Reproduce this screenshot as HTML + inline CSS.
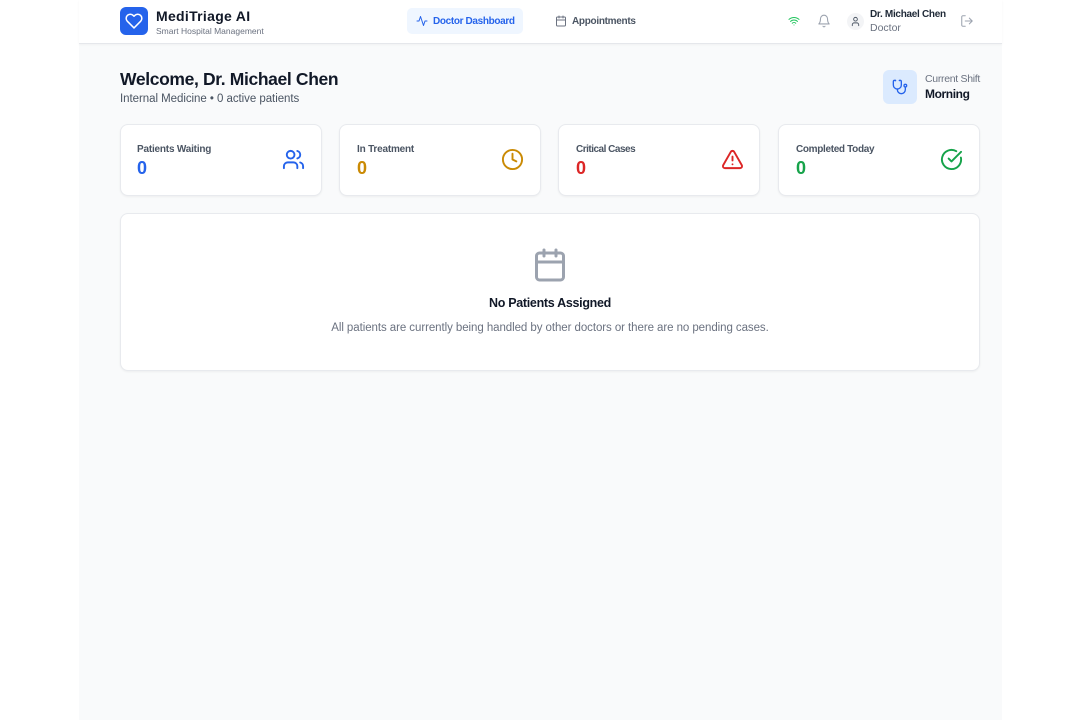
<!DOCTYPE html>
<html><head><meta charset="utf-8"><title>MediTriage AI</title>
<style>
*{box-sizing:border-box;margin:0;padding:0}
html,body{width:1080px;height:720px;background:#fff;overflow:hidden;font-family:"Liberation Sans","Noto Sans CJK SC",sans-serif}
.abs,.t,svg{position:absolute}
.t{white-space:nowrap;line-height:1}
svg{fill:none;stroke-linecap:round;stroke-linejoin:round;stroke-width:2}
.card{position:absolute;background:#fff;border:1px solid #e8eaee;border-radius:8px;box-shadow:0 1px 2px rgba(0,0,0,.05)}
.lbl{font-size:10px;font-weight:700;color:#4b5563;top:145px}
.num{font-size:18px;font-weight:700;top:159px}
</style></head><body>
<div class="abs" style="left:79px;top:0;width:923px;height:720px;background:#f9fafb"></div>
<div class="abs" style="left:79px;top:0;width:923px;height:44px;background:#fff;border-bottom:1px solid #e5e7eb;box-shadow:0 1px 2px rgba(0,0,0,.04)"></div>

<div class="abs" style="left:120px;top:7px;width:28px;height:28px;border-radius:6px;background:#2563eb"></div>
<svg style="left:125px;top:12px;stroke:#fff" width="18" height="18" viewBox="0 0 24 24"><path d="M20.840 4.610a5.500 5.500 0 0 0-7.780 0L12 5.670l-1.060-1.060a5.500 5.500 0 0 0-7.780 7.780l1.060 1.060L12 21.230l7.780-7.780 1.060-1.060a5.500 5.500 0 0 0 0-7.780z"/></svg>
<div class="t" style="left:156px;top:9px;font-size:14px;font-weight:700;color:#111827;letter-spacing:.3px">MediTriage AI</div>
<div class="t" style="left:156px;top:27px;font-size:8.500px;color:#6b7280">Smart Hospital Management</div>

<div class="abs" style="left:407px;top:8px;width:116px;height:26px;border-radius:5px;background:#eff6ff"></div>
<svg style="left:416px;top:15px;stroke:#2563eb;stroke-width:2" width="12" height="12" viewBox="0 0 24 24"><path d="M22 12h-4l-3 9L9 3l-3 9H2"/></svg>
<div class="t" style="left:433px;top:17px;font-size:10px;font-weight:700;color:#2563eb;letter-spacing:-.35px">Doctor Dashboard</div>
<svg style="left:555px;top:15px;stroke:#6b7280" width="12" height="12" viewBox="0 0 24 24"><path d="M8 2v4M16 2v4"/><rect x="3" y="4" width="18" height="18" rx="2"/><path d="M3 10h18"/></svg>
<div class="t" style="left:572px;top:17px;font-size:10px;font-weight:700;color:#4b5563;letter-spacing:-.3px">Appointments</div>

<svg style="left:788px;top:15px;stroke:#22c55e" width="12" height="12" viewBox="0 0 24 24"><path d="M12 20h.01M2 8.820a15 15 0 0 1 20 0M5 12.859a10 10 0 0 1 14 0M8.500 16.429a5 5 0 0 1 7 0"/></svg>
<svg style="left:817px;top:14px;stroke:#9ca3af;stroke-width:1.800" width="14" height="14" viewBox="0 0 24 24"><path d="M6 8a6 6 0 0 1 12 0c0 7 3 9 3 9H3s3-2 3-9M10.300 21a1.940 1.940 0 0 0 3.400 0"/></svg>
<div class="abs" style="left:847px;top:13px;width:17px;height:17px;border-radius:50%;background:#f3f4f6"></div>
<svg style="left:850px;top:16px;stroke:#4b5563" width="11" height="11" viewBox="0 0 24 24"><path d="M19 21v-2a4 4 0 0 0-4-4H9a4 4 0 0 0-4 4v2"/><circle cx="12" cy="7" r="4"/></svg>
<div class="t" style="left:870px;top:10px;font-size:10px;font-weight:700;color:#1f2937;letter-spacing:-.3px">Dr. Michael Chen</div>
<div class="t" style="left:870px;top:23px;font-size:10.500px;color:#6b7280">Doctor</div>
<svg style="left:960px;top:14px;stroke:#9ca3af;stroke-width:1.800" width="14" height="14" viewBox="0 0 24 24"><path d="M9 21H5a2 2 0 0 1-2-2V5a2 2 0 0 1 2-2h4M16 17l5-5-5-5M21 12H9"/></svg>

<div class="t" style="left:120px;top:71px;font-size:17.500px;font-weight:700;color:#111827;letter-spacing:-.36px">Welcome, Dr. Michael Chen</div>
<div class="t" style="left:120px;top:94px;font-size:11.500px;color:#4b5563;letter-spacing:-.05px">Internal Medicine • 0 active patients</div>

<div class="abs" style="left:883px;top:70px;width:34px;height:34px;border-radius:6px;background:#dbeafe"></div>
<svg style="left:892px;top:79px;stroke:#2563eb" width="16" height="16" viewBox="0 0 24 24"><path d="M4.800 2.300A.3.300 0 1 0 5 2H4a2 2 0 0 0-2 2v5a6 6 0 0 0 6 6 6 6 0 0 0 6-6V4a2 2 0 0 0-2-2h-1a.2.200 0 1 0 .3.300"/><path d="M8 15v1a6 6 0 0 0 6 6 6 6 0 0 0 6-6v-4"/><circle cx="20" cy="10" r="2"/></svg>
<div class="t" style="left:925px;top:74px;font-size:10.500px;color:#6b7280;letter-spacing:-.3px">Current Shift</div>
<div class="t" style="left:925px;top:88px;font-size:12px;font-weight:700;color:#111827;letter-spacing:-.4px">Morning</div>

<div class="card" style="left:120px;top:124px;width:202px;height:72px"></div>
<div class="card" style="left:339px;top:124px;width:202px;height:72px"></div>
<div class="card" style="left:558px;top:124px;width:202px;height:72px"></div>
<div class="card" style="left:778px;top:124px;width:202px;height:72px"></div>

<div class="t lbl" style="left:137px;letter-spacing:-.2px">Patients Waiting</div><div class="t num" style="left:137px;color:#2563eb">0</div>
<div class="t lbl" style="left:357px;letter-spacing:-.2px">In Treatment</div><div class="t num" style="left:357px;color:#ca8a04">0</div>
<div class="t lbl" style="left:576px;letter-spacing:-.5px">Critical Cases</div><div class="t num" style="left:576px;color:#dc2626">0</div>
<div class="t lbl" style="left:796px;letter-spacing:-.33px">Completed Today</div><div class="t num" style="left:796px;color:#16a34a">0</div>

<svg style="left:282px;top:148px;stroke:#2563eb" width="23" height="23" viewBox="0 0 24 24"><path d="M16 21v-2a4 4 0 0 0-4-4H6a4 4 0 0 0-4 4v2"/><circle cx="9" cy="7" r="4"/><path d="M22 21v-2a4 4 0 0 0-3-3.870M16 3.130a4 4 0 0 1 0 7.750"/></svg>
<svg style="left:500.500px;top:148px;stroke:#ca8a04" width="23" height="23" viewBox="0 0 24 24"><circle cx="12" cy="12" r="10"/><path d="M12 6v6l4 2"/></svg>
<svg style="left:720.500px;top:148px;stroke:#dc2626" width="23" height="23" viewBox="0 0 24 24"><path d="m21.730 18-8-14a2 2 0 0 0-3.480 0l-8 14A2 2 0 0 0 4 21h16a2 2 0 0 0 1.730-3M12 9v4M12 17h.01"/></svg>
<svg style="left:940px;top:148px;stroke:#16a34a" width="23" height="23" viewBox="0 0 24 24"><path d="M21.800 10A10 10 0 1 1 17 3.340"/><path d="m9 11 3 3L22 4"/></svg>

<div class="card" style="left:120px;top:213px;width:860px;height:158px"></div>
<svg style="left:532px;top:247px;stroke:#9ca3af" width="36" height="36" viewBox="0 0 24 24"><path d="M8 2v4M16 2v4"/><rect x="3" y="4" width="18" height="18" rx="2"/><path d="M3 10h18"/></svg>
<div class="t" style="left:120px;width:860px;text-align:center;top:297px;font-size:12.500px;font-weight:700;color:#111827;letter-spacing:-.3px">No Patients Assigned</div>
<div class="t" style="left:120px;width:860px;text-align:center;top:323px;font-size:11.500px;color:#6b7280;letter-spacing:-.07px">All patients are currently being handled by other doctors or there are no pending cases.</div>
</body></html>
